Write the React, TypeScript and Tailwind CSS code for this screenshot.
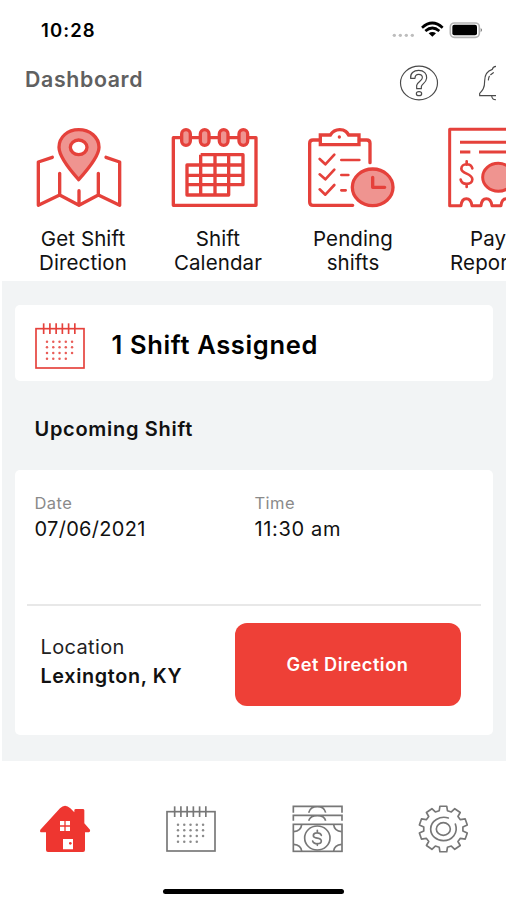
import React from 'react';

const RED = '#e5413b';
const PINK = '#ef9490';

const GEAR_POINTS = Array.from({ length: 10 }, (_, i) => {
  const point = (deg: number, rx: number, ry: number) => {
    const a = ((i * 36 + deg - 90) * Math.PI) / 180;
    return `${(130 + rx * Math.cos(a)).toFixed(1)},${(117 + ry * Math.sin(a)).toFixed(1)}`;
  };
  return [point(-12, 59, 56), point(-8, 73, 69), point(8, 73, 69), point(12, 59, 56)].join(' ');
}).join(' ');

const MapIcon = () => (
  <svg className="h-[110px] w-[120px]" viewBox="0 0 360 330" fill="none" stroke={RED} strokeWidth="10" strokeLinecap="round" strokeLinejoin="round">
    <path d="M97 127L55 141V271L119 240L177 271L235 240L299 271V141L258 127M119 175V240M177 227V271M235 175V240" />
    <path fill={PINK} d="M176 194C158 174 117 127 117 97C117 66 143 44 176 44S237 66 237 97C237 127 194 174 176 194Z" />
    <ellipse cx="176" cy="97" rx="25" ry="22" fill="white" />
  </svg>
);

const BigCalendarIcon = () => (
  <svg className="h-[110px] w-[120px]" viewBox="0 0 360 330" fill="none" stroke={RED} strokeWidth="10" strokeLinejoin="round">
    <rect x="55" y="68" width="248" height="203" />
    {[93, 149, 206, 265].map((x) => (
      <rect key={x} x={x - 13} y="44" width="26" height="47" rx="13" fill={PINK} />
    ))}
    <path d="M137 119H264V209H221V240H96V150H137V119M137 150H264M96 181H264M96 209H221M137 150V240M180 119V240M221 119V209" />
  </svg>
);

const ClipboardIcon = () => (
  <svg className="h-[110px] w-[120px]" viewBox="0 0 360 330" fill="none" stroke={RED} strokeWidth="10" strokeLinecap="round" strokeLinejoin="round">
    <path d="M90 75H69Q59 75 59 85V261Q59 271 69 271H188M208 75H230Q240 75 240 85V143" />
    <path d="M91 60H121C126 52 132 44 149 44S171 52 176 60H207V89H91Z" strokeLinejoin="miter" />
    <circle cx="148" cy="66" r="5" fill={RED} stroke="none" />
    <path strokeWidth="8" d="M89 132L106 148L133 119M89 178L106 193L133 164M89 223L106 239L133 210M154 135H208M154 180H175M154 226H167" />
    <ellipse cx="248" cy="217" rx="61" ry="55" fill={PINK} />
    <path d="M248 187V217H284" />
  </svg>
);

const ReceiptIcon = () => (
  <svg className="h-[110px] w-[120px]" viewBox="0 0 360 330" fill="none" stroke={RED} strokeWidth="9" strokeLinejoin="round">
    <path d="M330 43H74V272H108Q110 251 124 251T141 272H168Q170 251 184 251T201 272H228Q230 251 244 251T261 272H300" />
    <path d="M105 82H330M105 111H136M162 111H330" />
    <path strokeWidth="8" strokeLinecap="round" d="M142 160C138 143 109 144 109 161C109 177 142 175 142 193C142 211 111 211 107 194M125 139V149M125 207V216" />
    <ellipse cx="220" cy="187" rx="47" ry="42" fill={PINK} />
  </svg>
);

// Spiral calendar shared by the summary card and the tab bar
const SpiralCalendar = ({ className, color }: { className: string; color: string }) => (
  <svg className={className} viewBox="0 0 156 144" fill="none" stroke={color} strokeWidth="5">
    <rect x="6" y="20" width="144" height="118" />
    {[0, 1, 2, 3, 4, 5].map((i) => (
      <path key={i} d={`M${29 + i * 18.7} 4V36`} />
    ))}
    {[0, 1, 2, 3].map((row) =>
      [0, 1, 2, 3, 4].map((col) =>
        row === 3 && col === 4 ? null : (
          <circle key={`${row}-${col}`} cx={39 + col * 18.8} cy={59 + row * 17} r="3.7" fill={color} stroke="none" opacity="0.85" />
        )
      )
    )}
  </svg>
);

const HelpIcon = () => (
  <svg className="h-10 w-10" viewBox="0 0 120 120" fill="none" stroke="#4a4a4a" strokeWidth="3.5" strokeLinejoin="round">
    <ellipse cx="60" cy="60" rx="55.5" ry="50.5" />
    <path d="M35 46C33 31 44 22 59 22C75 22 84 32 83 45C82 59 68 63 67 71V77H53V67C54 57 69 54 70 45C71 38 66 34 59 34C51 34 48 38 48 46Z" />
    <ellipse cx="60" cy="92" rx="8" ry="6" />
  </svg>
);

const BellIcon = () => (
  <svg className="h-10 w-[18px]" viewBox="0 0 54 120" fill="none" stroke="#4a4a4a" strokeWidth="3.5" strokeLinecap="round" strokeLinejoin="round">
    <path d="M56 10C48 10 44 14 43 19C27 24 20 36 20 53C20 78 12 84 5 91V98H56M41 99C42 106 48 111 56 110" />
    <path d="M31 51C32 47 32 43 34 40M38 35L46 29" />
  </svg>
);

const HomeIcon = () => (
  <svg className="h-20 w-[107px]" viewBox="0 0 321 240" fill="#ee3630">
    <path d="M46 119L105 55Q120 40 136 55L148 67V61Q148 57 153 57H173Q178 57 178 61V100L195 119Q197 127 188 127H180V180Q180 186 174 186H69Q63 186 63 180V127H50Q43 127 46 119Z" />
    <path fill="white" d="M105 93h13v13h-13zM122 93h13v13h-13zM105 110h13v13h-13zM122 110h13v13h-13zM114 147h30v31h-30z" />
    <circle cx="136" cy="160" r="4" />
  </svg>
);

const CashIcon = () => (
  <svg className="h-20 w-[107px]" viewBox="0 0 321 240" fill="none" stroke="#777777" strokeWidth="5">
    <path d="M55 68V49H201V68M55 92V76H201V92M101 68Q106 50 127 50T152 68M101 92Q106 77 127 77T152 92" />
    <rect x="55" y="103" width="146" height="81" />
    <ellipse cx="127" cy="144" rx="38" ry="36" />
    <path d="M80 104Q78 123 56 125M176 104Q178 123 200 125M80 183Q78 165 56 163M176 183Q178 165 200 163" />
    <path strokeLinecap="round" d="M139 136C136 126 115 126 115 137C115 148 139 141 139 153C139 164 116 164 113 153M127 121V129M127 161V166" />
  </svg>
);

const GearIcon = () => (
  <svg className="h-20 w-[107px]" viewBox="0 0 321 240" fill="none" stroke="#777777" strokeWidth="5" strokeLinejoin="round">
    <polygon points={GEAR_POINTS} />
    <ellipse cx="130" cy="117" rx="21" ry="19" />
    <path strokeLinecap="round" d="M145 84C120 76 92 93 92 117C92 138 110 152 130 152C156 152 176 129 166 102" />
  </svg>
);

const shortcuts = [
  { icon: <MapIcon />, lines: ['Get Shift', 'Direction'] },
  { icon: <BigCalendarIcon />, lines: ['Shift', 'Calendar'] },
  { icon: <ClipboardIcon />, lines: ['Pending', 'shifts'] },
  { icon: <ReceiptIcon />, lines: ['Pay', 'Reports'] },
];

const StatusBar: React.FC = () => (
  <div className="flex h-[60px] shrink-0 items-center justify-between pl-[41px] pr-[24px]">
    <span className="pt-[2px] text-[18.5px] font-semibold tracking-[1.1px] text-black">10:28</span>
    <svg className="h-5 w-[92px]" viewBox="0 0 276 60">
      <g fill="#bdbdbd">
        <circle cx="10" cy="46" r="5" />
        <circle cx="28" cy="46" r="5" />
        <circle cx="46" cy="46" r="5" />
        <circle cx="64" cy="46" r="5" />
      </g>
      <path d="M93 23Q124 -5 155 23M103 33Q124 15 145 33" fill="none" stroke="black" strokeWidth="8" />
      <path d="M113 40Q124 32 135 40L124 50Z" />
      <rect x="178" y="9" width="87" height="43" rx="12" fill="none" stroke="#b5b5b5" strokeWidth="5" />
      <rect x="184" y="14" width="74" height="32" rx="6" />
      <path d="M269 24Q277 30 269 37Z" fill="#777777" />
    </svg>
  </div>
);

const App: React.FC = () => {
  return (
    <div className="flex h-[900px] w-[507px] flex-col overflow-hidden bg-white font-['Inter','Liberation_Sans',sans-serif] text-[#111111]">
      <StatusBar />

      <header className="flex h-[55px] shrink-0 items-start justify-between pl-[25px] pr-[11px]">
        <h1 className="pt-[4.5px] text-[21.3px] leading-7 font-semibold tracking-[0.65px] text-[#606060]">Dashboard</h1>
        <div className="flex gap-[39px] pt-[3px]">
          <HelpIcon />
          <BellIcon />
        </div>
      </header>

      <div className="mr-px flex h-[166px] shrink-0 items-start gap-[15px] overflow-hidden pl-5">
        {shortcuts.map(({ icon, lines }) => (
          <button key={lines[1]} className="w-[120px] shrink-0">
            {icon}
            <span className="ml-[6px] block pt-[2px] text-center text-[20.5px] leading-6 tracking-[0.1px]">
              {lines[0]}
              <br />
              {lines[1]}
            </span>
          </button>
        ))}
      </div>

      <main className="mr-px ml-[2px] h-[480px] shrink-0 bg-[#f2f4f5] pr-[13.5px] pl-[12.5px] pt-6">
        <section className="flex h-[76px] items-center rounded-[5px] bg-white pl-[19px]">
          <SpiralCalendar className="mt-[5px] h-12 w-[52px]" color={RED} />
          <h2 className="ml-[26px] pt-[5px] text-[25.5px] font-semibold tracking-[0.65px] text-black">1 Shift Assigned</h2>
        </section>

        <h3 className="h-[89px] pt-[34px] pl-5 text-[20px] leading-[28px] font-semibold tracking-[0.7px]">Upcoming Shift</h3>

        <section className="h-[265px] rounded-[5px] bg-white">
          <div className="mx-3 flex h-[136px] border-b-2 border-[#e8e8e8] pt-[23px] pl-2">
            <div className="w-[220px]">
              <p className="text-[16.5px] leading-5 tracking-[0.45px] text-[#8a8a8a]">Date</p>
              <p className="pt-[2px] text-[20px] leading-7 tracking-[0.3px]">07/06/2021</p>
            </div>
            <div>
              <p className="text-[16.5px] leading-5 tracking-[0.45px] text-[#8a8a8a]">Time</p>
              <p className="pt-[2px] text-[20px] leading-7 tracking-[0.65px]">11:30 am</p>
            </div>
          </div>
          <div className="flex pt-[17px] pl-[26px]">
            <div className="w-[194px] pt-[10px]">
              <p className="text-[20px] leading-7 tracking-[0.35px] text-[#222222]">Location</p>
              <p className="text-[19.8px] leading-[30px] font-semibold tracking-[0.65px]">Lexington, KY</p>
            </div>
            <button className="h-[83px] w-[226px] rounded-[12px] bg-[#ee4037] text-[18.2px] font-semibold tracking-[0.55px] text-white">
              Get Direction
            </button>
          </div>
        </section>
      </main>

      <nav className="flex h-[128px] shrink-0 gap-[18px] overflow-hidden pt-[29px] pl-[25px]">
        <button className="h-20 shrink-0"><HomeIcon /></button>
        <button className="h-20 w-[107px] shrink-0">
          <SpiralCalendar className="mb-[3px] ml-[15px] h-12 w-[52px]" color="#777777" />
        </button>
        <button className="h-20 shrink-0"><CashIcon /></button>
        <button className="h-20 shrink-0"><GearIcon /></button>
      </nav>
      <div className="ml-[163px] h-[5px] w-[181px] shrink-0 rounded-full bg-black" />
    </div>
  );
};

export default App;
